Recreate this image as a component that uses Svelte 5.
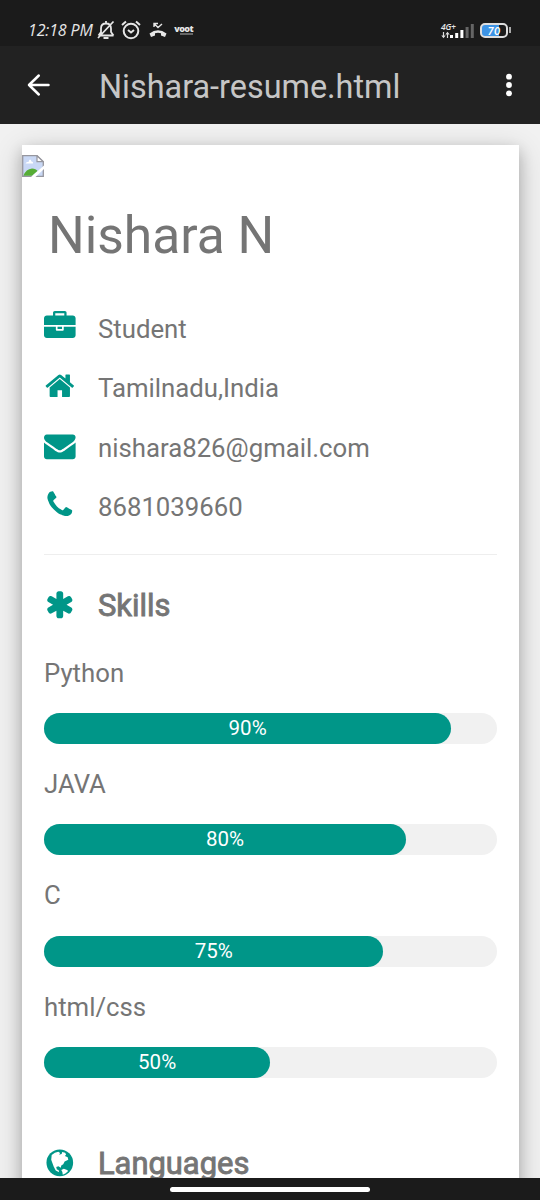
<script>
  const icons = {
    briefcase: 'M640 256h512v-128h-512v128zm1152 640v480q0 66-47 113t-113 47h-1472q-66 0-113-47t-47-113v-480h672v160q0 26 19 45t45 19h320q26 0 45-19t19-45v-160h672zm-768 0v128h-256v-128h256zm768-480v384h-1792v-384q0-66 47-113t113-47h352v-160q0-40 28-68t68-28h576q40 0 68 28t28 68v160h352q66 0 113 47t47 113z',
    home: 'M1472 992v480q0 26-19 45t-45 19h-384v-384h-256v384h-384q-26 0-45-19t-19-45v-480q0-1 .5-3t.5-3l575-474 575 474q1 2 1 6zm223-69l-62 74q-8 9-21 11h-3q-13 0-21-7l-692-577-692 577q-12 8-24 7-13-2-21-11l-62-74q-8-10-7-23.5t11-21.5l719-599q32-26 76-26t76 26l244 204v-195q0-14 9-23t23-9h192q14 0 23 9t9 23v408l219 182q10 8 11 21.5t-7 23.5z',
    envelope: 'M1792 710v794q0 66-47 113t-113 47h-1472q-66 0-113-47t-47-113v-794q44 49 101 87 362 246 497 345 57 42 92.5 65.5t94.5 48 110 24.5h2q51 0 110-24.5t94.5-48 92.5-65.5q170-123 498-345 57-39 100-87zm0-294q0 79-49 151t-122 123q-376 261-468 325-10 7-42.5 31t-54 38.5-52 32.5-57.5 27-50 9h-2q-23 0-50-9t-57.5-27-52-32.5-54-38.5-42.5-31q-91-64-262-182.5t-205-142.5q-62-42-117-115.5t-55-136.5q0-78 41.5-130t118.5-52h1472q65 0 112.5 47t47.5 113z',
    phone: 'M1600 1240q0 27-10 70.5t-21 68.5q-21 50-122 106-94 51-186 51-27 0-53-3.5t-57.5-12.5-47-14.5-55.5-20.5-49-18q-98-35-175-83-127-79-264-216t-216-264q-48-77-83-175-3-9-18-49t-20.5-55.5-14.5-47-12.5-57.5-3.5-53q0-92 51-186 56-101 106-122 25-11 68.5-21t70.5-10q14 0 21 3 18 6 53 76 11 19 30 54t35 63.5 31 53.5q3 4 17.5 25t21.5 35.5 7 28.5q0 20-28.5 50t-62 55-62 53-28.5 46q0 9 5 22.5t8.5 20.5 14 24 11.5 19q76 137 174 235t235 174q2 1 19 11.5t24 14 20.5 8.5 22.5 5q18 0 46-28.5t53-62 55-62 50-28.5q14 0 28.5 7t35.5 21.5 25 17.5q25 15 53.5 31t63.5 35 54 30q70 35 76 53 3 7 3 21z',
    asterisk: 'M1546 1050q46 26 59.5 77.5t-12.5 97.5l-64 110q-26 46-77.5 59.5t-97.5-12.5l-266-153v307q0 52-38 90t-90 38h-128q-52 0-90-38t-38-90v-307l-266 153q-46 26-97.5 12.5t-77.5-59.5l-64-110q-26-46-12.5-97.5t59.5-77.5l266-154-266-154q-46-26-59.5-77.5t12.5-97.5l64-110q26-46 77.5-59.5t97.5 12.5l266 153v-307q0-52 38-90t90-38h128q52 0 90 38t38 90v307l266-153q46-26 97.5-12.5t77.5 59.5l64 110q26 46 12.5 97.5t-59.5 77.5l-266 154z'
  };
  const contacts = [
    { icon: 'briefcase', text: 'Student' },
    { icon: 'home', text: 'Tamilnadu,India' },
    { icon: 'envelope', text: 'nishara826@gmail.com' },
    { icon: 'phone', text: '8681039660' }
  ];
  const skills = [
    { name: 'Python', level: 90 },
    { name: 'JAVA', level: 80 },
    { name: 'C', level: 75 },
    { name: 'html/css', level: 50 }
  ];
</script>

<div class="screen">
  <header class="status">
    <span class="time">12:18 PM</span>
    <svg class="bell" width="18" height="20" viewBox="0 0 18 20" fill="none" stroke="#e6e6e6" stroke-width="1.8">
      <path d="M1.500 15.500h15M4 15V8.500Q4 3.500 9 3.500T14 8.500V12l2.500 3.500M9 1v2M1.500 15.500L4 12M1 18L16.500 1.500" />
      <path d="M6.500 18h5" stroke-width="2" />
    </svg>
    <svg class="alarm" width="20" height="20" viewBox="0 0 20 20" fill="none" stroke="#e6e6e6" stroke-width="2">
      <circle cx="10" cy="11" r="7.300" />
      <path d="M1 5l4-3.500M19 5l-4-3.500M7 10l3 2.500 3-2.500" />
    </svg>
    <svg class="missed" width="18" height="16" viewBox="0 0 18 16">
      <path d="M.5 11.500Q9 5 17.500 11.500L16 15l-4-1.500v-2.300q-3-.8-6 0v2.300L2 15z" fill="#e6e6e6" />
      <path d="M5 5V1.500h4M5 1.500l4 4L13 2" fill="none" stroke="#e6e6e6" stroke-width="1.400" />
    </svg>
    <span class="voot"><b>voot</b><i></i></span>
    <span class="gap"></span>
    <span class="signal">
      <span class="net">4G+</span>
      <svg width="9" height="8" viewBox="0 0 9 8">
        <path d="M2.500 1v5M6.500 2v5" stroke="#ddd" stroke-width="1.200" />
        <path d="M.3 4.500l2.200 2.800 2.200-2.800zM4.300 3.500L6.500.7l2.200 2.800z" fill="#ddd" />
      </svg>
    </span>
    <svg class="bars" width="24" height="16" viewBox="0 0 24 16">
      <path d="M0 12h3v3H0zM5.200 10h3v5h-3zM10.400 7h3v8h-3z" fill="#fff" />
      <path d="M15.600 4h3v11h-3zM20.800 1h3v14h-3z" fill="#656565" />
    </svg>
    <span class="battery"><span>70</span></span><i class="tip"></i>
  </header>

  <nav class="appbar">
    <svg width="24" height="24" viewBox="0 0 24 24" fill="none" stroke="#fff" stroke-width="2.500" stroke-linecap="round" stroke-linejoin="round">
      <path d="M21.500 12H2M11.800 2.500L2 12l9.800 9.500" />
    </svg>
    <h1>Nishara-resume.html</h1>
    <svg class="dots" width="6" height="24" viewBox="0 0 6 24" fill="#fff">
      <circle cx="3" cy="3.700" r="2.900" /><circle cx="3" cy="12" r="2.900" /><circle cx="3" cy="20.300" r="2.900" />
    </svg>
  </nav>

  <main>
    <article class="card">
      <svg class="broken" width="22" height="22" viewBox="0 0 22 22">
        <path d="M.7.700H15l6.300 6V21.300H.7z" fill="#c9d8f5" stroke="#96969e" stroke-width="1.300" />
        <path d="M3.500 8.500Q4 6.500 6.500 7 8 2.500 9.500 6.500q2 0 1.500 2z" fill="#fff" />
        <path d="M1.400 20.700Q4 14 10 13.500q4 0 5.500 2.500L10 20.700z" fill="#56ad36" />
        <path d="M15 .7v6h6.300z" fill="#fff" stroke="#96969e" stroke-width="1.200" />
        <path d="M9 22L22 10.500V14L13.500 22z" fill="#fff" />
      </svg>
      <h2>Nishara N</h2>

      <ul class="contacts">
        {#each contacts as c}
          <li>
            <svg class="fa" viewBox="0 0 1792 1792"><path d={icons[c.icon]} /></svg>
            <span>{c.text}</span>
          </li>
        {/each}
      </ul>

      <hr />

      <h3>
        <svg class="fa" viewBox="0 0 1792 1792"><path d={icons.asterisk} /></svg>
        <span>Skills</span>
      </h3>

      {#each skills as s}
        <section class="skill">
          <p>{s.name}</p>
          <div class="track"><div class="fill" style:width="{s.level}%">{s.level}%</div></div>
        </section>
      {/each}

      <h3 class="languages">
        <svg class="fa" viewBox="0 0 32 32">
          <circle cx="16" cy="16" r="13.500" />
          <path class="land" d="M7.800 8.200L11 5.700l3.500-.9 1.800 1.400-1 1.600 2.600-.7.500-2 3 .6 1 2-1.200 1.500 2.800 1.300.6 2.300-3.700 2-1.400 2.600-2 1.400-.5 2.200-2.400-1.400-2.200.7.600 2.600 1.700.5.600 2.200-3.400-1.800L9.900 20l-1.400-3.700-1.200-3.500z" />
          <path class="land" d="M17.500 23.300l2.600-1.300 3.300 1.200 1 1-2.400 2.500-3 1.300-.4-2.700z" />
        </svg>
        <span>Languages</span>
      </h3>
    </article>
  </main>

  <footer><i></i></footer>
</div>

<style>
  :global(body) { margin: 0; }
  .screen {
    width: 540px;
    height: 1200px;
    display: flex;
    flex-direction: column;
    overflow: hidden;
    background: #f1f1f1;
    color: #757575;
    font-family: Roboto, sans-serif;
  }
  h1, h2, h3, p, ul { margin: 0; padding: 0; font-weight: 400; }
  svg { display: block; flex: none; }

  .status {
    flex: none;
    box-sizing: border-box;
    height: 46px;
    padding: 14px 29px 0 28px;
    display: flex;
    align-items: center;
    background: #1b1b1b;
    color: #e6e6e6;
  }
  .time { width: 69px; font: italic 500 16px/20px "Open Sans", sans-serif; letter-spacing: -.15px; white-space: nowrap; }
  .alarm { margin-left: 6px; }
  .missed { margin-left: 8px; }
  .voot { margin-left: 6px; width: 20px; display: flex; flex-direction: column; align-items: flex-end; }
  .voot b { font: 800 9px/8px "Open Sans", sans-serif; letter-spacing: -.6px; }
  .voot i { width: 13px; height: 2px; background: #666; }
  .gap { flex: 1; }
  .signal { width: 9px; display: flex; flex-direction: column; }
  .net { font: italic 600 8.500px/9px "Open Sans", sans-serif; letter-spacing: -.3px; }
  .bars { margin: 1px 6px 0 0; }
  .battery {
    box-sizing: border-box;
    width: 28px;
    height: 15px;
    border: 2px solid #ddd;
    border-radius: 5px;
    background: linear-gradient(90deg, #3d94e6 70%, #1b1b1b 70%);
    text-align: center;
    font: italic 700 11px/11px Lato, sans-serif;
    color: #fff;
  }
  .tip { width: 2px; height: 6px; margin-left: 1px; background: #aaa; }

  .appbar {
    flex: none;
    box-sizing: border-box;
    height: 77.5px;
    padding: 0 28px 0 27px;
    display: flex;
    align-items: center;
    background: #222;
  }
  h1 { flex: 1; margin: 4.500px 0 0 48px; font-size: 32.400px; line-height: 40px; color: #c6c6c6; }

  main { flex: 1; min-height: 0; overflow: hidden; padding: 21.800px 21.500px 0 22px; }
  .card {
    box-sizing: border-box;
    height: 1200px;
    padding: 10px 22px 0;
    background: #fff;
    box-shadow: 0 5.500px 13.700px rgba(0, 0, 0, .2), 0 5.500px 27.500px rgba(0, 0, 0, .19);
  }
  .broken { margin-left: -22px; }
  h2 { margin: 26.400px 0 0 4px; font-size: 51.500px; line-height: 64px; }
  .contacts { margin-top: 31.500px; list-style: none; }
  li { height: 59.300px; display: flex; align-items: center; font-size: 25.750px; }
  li span { margin-top: .4px; }
  .fa { width: 31.600px; height: 31.600px; margin: 0 22.400px 4px 0; fill: #009688; }
  .land { fill: #fff; }
  hr { margin: 17.600px 0 0; border: 0; border-top: 1px solid #eee; }
  h3 {
    height: 60px;
    margin-top: 19.600px;
    display: flex;
    align-items: center;
    font-size: 30.900px;
    -webkit-text-stroke: .9px #757575;
  }
  h3 span { margin-top: 1px; }
  h3 .fa { margin-bottom: 0; }
  .skill { height: 111.300px; }
  .skill p { height: 78.400px; box-sizing: border-box; padding-top: 22.300px; font-size: 25.750px; line-height: 32px; }
  .track { height: 31.200px; border-radius: 16px; background: #f1f1f1; }
  .fill {
    height: 100%;
    border-radius: 16px;
    background: #009688;
    color: #fff;
    text-align: center;
    font-size: 20.500px;
    line-height: 31.200px;
  }
  .languages { margin-top: 53px; }

  footer { flex: none; height: 22px; display: flex; align-items: center; justify-content: center; background: #1b1b1b; }
  footer i { width: 200px; height: 5px; border-radius: 3px; background: #fff; }
</style>
